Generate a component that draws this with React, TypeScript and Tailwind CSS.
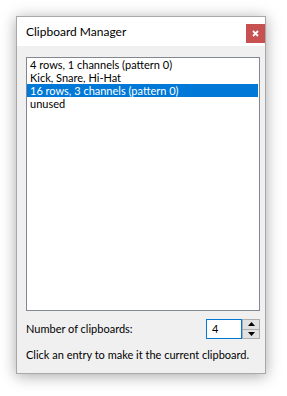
import React from "react";

const items = [
  "4 rows, 1 channels (pattern 0)",
  "Kick, Snare, Hi-Hat",
  "16 rows, 3 channels (pattern 0)",
  "unused",
];

export default function App() {
  return (
    <div
      className="w-[287px] h-[396px] bg-white pt-4 pl-4 text-[11px] text-black"
      style={{ fontFamily: 'Lato, "Segoe UI", sans-serif' }}
    >
      <div className="w-[250px] h-[358px] border border-[#a8a8a8] bg-[#f0f0f0] flex flex-col shadow-[0_2px_14px_rgba(0,0,0,0.35)]">
        <div className="h-[29px] bg-white flex items-start justify-between">
          <div className="pl-[9px] pt-[7px] text-[12px] leading-[16px]">Clipboard Manager</div>
          <div className="mt-[7px] w-[19px] h-[19px] bg-[#c75050] flex items-center justify-center">
            <svg width="7" height="7" viewBox="0 0 7 7">
              <path d="M1 1L6 6M6 1L1 6" stroke="white" strokeWidth="1.8" />
            </svg>
          </div>
        </div>
        <div className="flex flex-col pl-[9px] pr-[5px] pt-[11px]">
          <div className="h-[254px] border border-[#828790] bg-white overflow-hidden">
            {items.map((t, i) => (
              <div
                key={i}
                className={
                  "h-[13px] leading-[13px] pl-[3px] whitespace-nowrap mr-[1px] " +
                  (i === 2 ? "bg-[#0078d7] text-white" : "")
                }
              >
                {t}
              </div>
            ))}
          </div>
          <div className="mt-[8px] h-[20px] flex items-center">
            <div>Number of clipboards:</div>
            <div className="ml-auto flex h-[20px]">
              <div className="w-[36px] h-[20px] border border-[#0078d7] bg-white pl-[5px] leading-[18px]">4</div>
              <div className="w-[18px] h-[20px] border border-[#adadad] bg-[#e1e1e1] flex flex-col">
                <div className="flex-1 flex items-center justify-center border-b border-[#adadad]">
                  <svg width="7" height="4" viewBox="0 0 7 4"><path d="M3.5 0L7 4H0Z" fill="black" /></svg>
                </div>
                <div className="flex-1 flex items-center justify-center">
                  <svg width="7" height="4" viewBox="0 0 7 4"><path d="M0 0H7L3.5 4Z" fill="black" /></svg>
                </div>
              </div>
            </div>
          </div>
          <div className="mt-[9px] leading-[13px] whitespace-nowrap">Click an entry to make it the current clipboard.</div>
        </div>
      </div>
    </div>
  );
}
